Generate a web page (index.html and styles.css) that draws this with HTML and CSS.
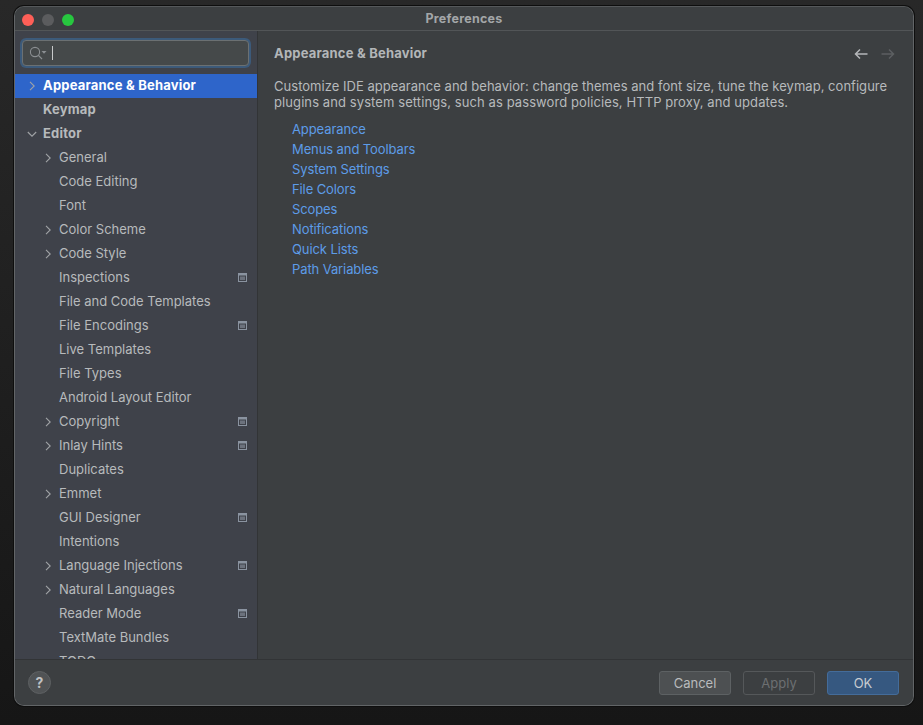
FILE: index.html
```html
<!DOCTYPE html>
<html lang="en">
<head>
<meta charset="utf-8">
<title>Preferences</title>
<link rel="stylesheet" href="styles.css">
</head>
<body>
<svg class="defs" width="0" height="0" aria-hidden="true">
  <symbol id="right" viewBox="0 0 10 10"><path d="M3 .8 7.2 5 3 9.2" fill="none" stroke="currentColor" stroke-width="1.1"/></symbol>
  <symbol id="down" viewBox="0 0 10 10"><path d="M.8 3 5 7.2 9.2 3" fill="none" stroke="currentColor" stroke-width="1.1"/></symbol>
  <symbol id="proj" viewBox="0 0 9 9"><path fill-rule="evenodd" d="M0 0h9v9H0zM1 2.500V8h7V2.500z" fill="currentColor"/><path d="M2 3.500h5V7H2z" fill="currentColor" opacity=".6"/></symbol>
</svg>
<main class="window">
  <header class="titlebar">
    <div class="lights"><i class="light red"></i><i class="light grey"></i><i class="light green"></i></div>
    <h1 class="title">Preferences</h1>
  </header>
  <div class="body">
    <aside class="sidebar">
      <div class="search">
        <svg class="search-icon" width="18" height="14" viewBox="0 0 18 14"><circle cx="6" cy="6" r="4.6" fill="none" stroke="#8b8f92" stroke-width="1.1"/><path d="M9.4 9.4 13 13" stroke="#8b8f92" stroke-width="1.2" fill="none"/><path d="M12.5 5h5l-2.500 2.800z" fill="#8b8f92"/></svg>
        <span class="caret"></span>
      </div>
      <nav class="tree">
        <div class="row top selected"><svg class="chev"><use href="#right"/></svg><span>Appearance &amp; Behavior</span></div>
        <div class="row top"><span>Keymap</span></div>
        <div class="row top"><svg class="chev"><use href="#down"/></svg><span>Editor</span></div>
        <div class="row"><svg class="chev"><use href="#right"/></svg><span>General</span></div>
        <div class="row"><span>Code Editing</span></div>
        <div class="row"><span>Font</span></div>
        <div class="row"><svg class="chev"><use href="#right"/></svg><span>Color Scheme</span></div>
        <div class="row"><svg class="chev"><use href="#right"/></svg><span>Code Style</span></div>
        <div class="row"><span>Inspections</span><svg class="mark"><use href="#proj"/></svg></div>
        <div class="row"><span>File and Code Templates</span></div>
        <div class="row"><span>File Encodings</span><svg class="mark"><use href="#proj"/></svg></div>
        <div class="row"><span>Live Templates</span></div>
        <div class="row"><span>File Types</span></div>
        <div class="row"><span>Android Layout Editor</span></div>
        <div class="row"><svg class="chev"><use href="#right"/></svg><span>Copyright</span><svg class="mark"><use href="#proj"/></svg></div>
        <div class="row"><svg class="chev"><use href="#right"/></svg><span>Inlay Hints</span><svg class="mark"><use href="#proj"/></svg></div>
        <div class="row"><span>Duplicates</span></div>
        <div class="row"><svg class="chev"><use href="#right"/></svg><span>Emmet</span></div>
        <div class="row"><span>GUI Designer</span><svg class="mark"><use href="#proj"/></svg></div>
        <div class="row"><span>Intentions</span></div>
        <div class="row"><svg class="chev"><use href="#right"/></svg><span>Language Injections</span><svg class="mark"><use href="#proj"/></svg></div>
        <div class="row"><svg class="chev"><use href="#right"/></svg><span>Natural Languages</span></div>
        <div class="row"><span>Reader Mode</span><svg class="mark"><use href="#proj"/></svg></div>
        <div class="row"><span>TextMate Bundles</span></div>
        <div class="row"><span>TODO</span></div>
      </nav>
    </aside>
    <section class="content">
      <div class="content-head">
        <h2 class="heading">Appearance &amp; Behavior</h2>
        <div class="arrows">
          <svg width="14" height="12" viewBox="0 0 14 12"><path d="M13.500 6H1.500M6 1.500 1.500 6 6 10.500" fill="none" stroke="#b4b7b9" stroke-width="1.500"/></svg>
          <svg width="14" height="12" viewBox="0 0 14 12"><path d="M.5 6H12.500M8 1.500 12.500 6 8 10.500" fill="none" stroke="#5c5f61" stroke-width="1.500"/></svg>
        </div>
      </div>
      <p class="desc">Customize IDE appearance and behavior: change themes and font size, tune the keymap, configure<br><span class="desc-wide">plugins and system settings, such as password policies, HTTP proxy, and updates.</span></p>
      <ul class="links">
        <li><a href="#">Appearance</a></li>
        <li><a href="#">Menus and Toolbars</a></li>
        <li><a href="#">System Settings</a></li>
        <li><a href="#">File Colors</a></li>
        <li><a href="#">Scopes</a></li>
        <li><a href="#">Notifications</a></li>
        <li><a href="#">Quick Lists</a></li>
        <li><a href="#">Path Variables</a></li>
      </ul>
    </section>
  </div>
  <footer class="footer">
    <button class="help" type="button">?</button>
    <div class="buttons">
      <button class="btn" type="button">Cancel</button>
      <button class="btn disabled" type="button">Apply</button>
      <button class="btn primary" type="button">OK</button>
    </div>
  </footer>
</main>
</body>
</html>
```
FILE: styles.css
```css
* { box-sizing: border-box; }
html, body { height: 100%; }
body {
  margin: 0;
  padding: 6px 9px 19px 14px;
  background: linear-gradient(#282828, #161616);
  font-family: Inter, "Noto Sans", sans-serif;
  font-size: 13px;
  color: #b7babc;
  overflow: hidden;
}
.defs { position: absolute; }
.window {
  width: 900px;
  height: 700px;
  display: flex;
  flex-direction: column;
  background: #3c3f41;
  border: 1px solid #626567;
  border-top-color: #55585a;
  border-radius: 10px;
  box-shadow: 0 0 0 1px #0e0e0e;
  overflow: hidden;
}
.titlebar {
  flex: none;
  height: 24px;
  display: flex;
  align-items: center;
  justify-content: center;
  position: relative;
  background: #3c3f41;
  border-bottom: 1px solid #525557;
}
.lights { position: absolute; left: 7px; top: 7px; display: flex; gap: 8px; }
.light { width: 12px; height: 12px; border-radius: 50%; display: block; }
.red { background: #fe5f57; }
.grey { background: #5b5c5e; }
.green { background: #27c73f; }
.title { margin: 0 0 1px; font-size: 12.500px; font-weight: 700; letter-spacing: .25px; color: #a3a6a8; }
.body { flex: 1; min-height: 0; display: flex; }
.sidebar {
  flex: none;
  width: 243px;
  background: #3f424a;
  border-right: 1px solid #323436;
  display: flex;
  flex-direction: column;
  padding-top: 9px;
}
.search {
  flex: none;
  height: 26px;
  margin: 0 8px 8px 7px;
  display: flex;
  align-items: center;
  padding-left: 6px;
  gap: 6px;
  background: #45494a;
  border: 1px solid #6b7072;
  border-radius: 4px;
  box-shadow: 0 0 0 2px #3c5a7a;
}
.search-icon { flex: none; }
.caret { width: 1px; height: 14px; background: #c8cacb; margin-left: -1px; }
.tree { flex: 1; min-height: 0; overflow: hidden; }
.row {
  height: 24px;
  display: flex;
  align-items: center;
  padding-left: 44px;
  padding-bottom: 2px;
  position: relative;
  white-space: nowrap;
}
.row.top { padding-left: 28px; font-weight: 700; letter-spacing: .2px; }
.row.selected { background: #2e65ca; color: #fff; }
.chev {
  position: absolute;
  left: 28px;
  top: 7px;
  width: 10px;
  height: 10px;
  color: #a0a3a6;
}
.top .chev { left: 12px; }
.mark {
  width: 9px;
  height: 9px;
  position: absolute;
  left: 223px;
  top: 7px;
  color: #8a93a0;
}
.content { flex: 1; min-width: 0; padding: 0 18px 0 16px; }
.content-head {
  height: 46px;
  display: flex;
  align-items: center;
  justify-content: space-between;
}
.heading { margin: 0 0 2px; font-size: 13px; font-weight: 700; letter-spacing: .2px; color: #b3b6b8; }
.arrows { display: flex; gap: 13px; }
.desc { margin: 1px 0 0; line-height: 16px; letter-spacing: .03px; color: #b7babc; }
.desc-wide { letter-spacing: .09px; }
.links { margin: 9px 0 0; padding: 0 0 0 18px; list-style: none; }
.links li { height: 20px; line-height: 20px; }
.links a { color: #5c9ce8; text-decoration: none; letter-spacing: -.1px; }
.footer {
  flex: none;
  height: 46px;
  display: flex;
  align-items: center;
  justify-content: space-between;
  padding: 0 14px 0 13px;
  background: #3c3f41;
  border-top: 1px solid #323436;
}
.help {
  width: 23px;
  height: 23px;
  padding: 0;
  border-radius: 50%;
  background: #505355;
  border: 1px solid #5e6163;
  color: #c0c2c4;
  font: 700 14px Inter, sans-serif;
}
.buttons { display: flex; gap: 12px; }
.btn {
  width: 72px;
  height: 24px;
  padding: 0;
  border-radius: 3px;
  border: 1px solid #5d6163;
  background: #4d5052;
  color: #b9bbbd;
  font: 13px Inter, sans-serif;
}
.btn.disabled { background: transparent; color: #6c6f71; border-color: #55585a; }
.btn.primary { background: #365880; border-color: #446c9a; color: #c8ccd0; }
```
